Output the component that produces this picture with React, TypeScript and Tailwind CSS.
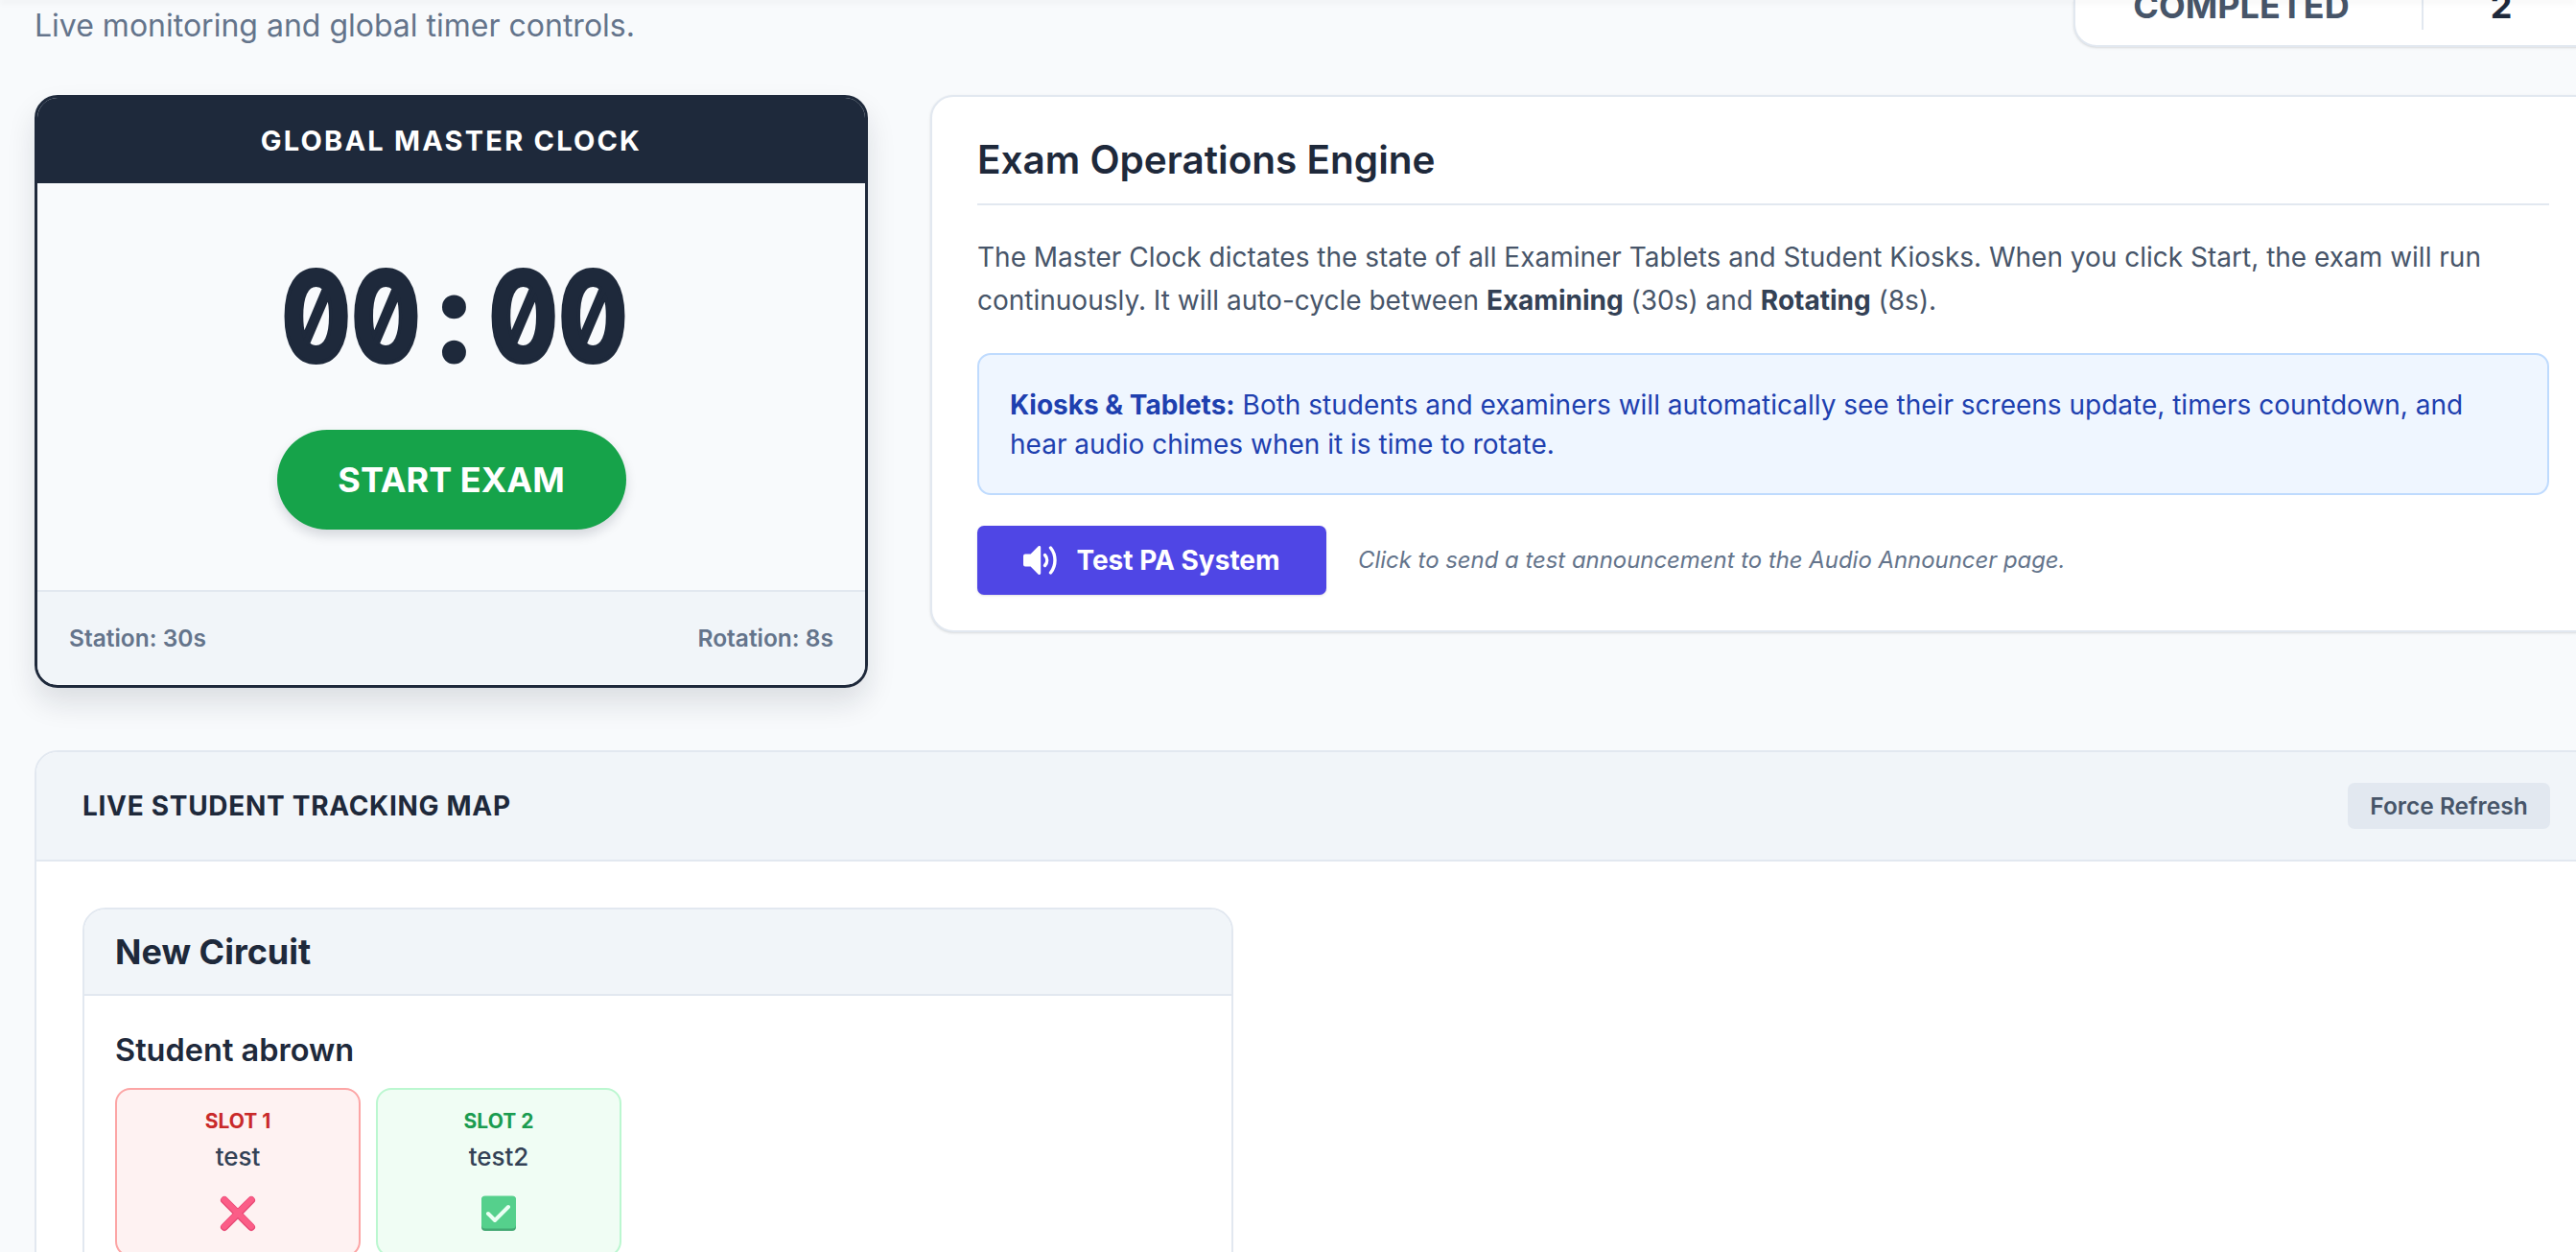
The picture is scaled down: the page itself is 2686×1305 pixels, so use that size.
const sans = "font-['Inter',sans-serif]";

function SpeakerIcon() {
    return (
        <svg width="36" height="30" viewBox="0 0 36 30" aria-hidden="true">
            <path d="M15.5 0.4L7.6 8.5H2a2 2 0 0 0-2 2v9a2 2 0 0 0 2 2h5.6l7.9 8.1a1.6 1.6 0 0 0 2.7-1.1V1.5a1.6 1.6 0 0 0-2.7-1.1z" fill="#fff" />
            <path d="M22.5 9.5c2.9 3.2 2.9 7.800 0 11" fill="none" stroke="#fff" strokeWidth="3.400" strokeLinecap="round" />
            <path d="M28.500 2c6 7.500 6 18.500 0 26" fill="none" stroke="#fff" strokeWidth="3.400" strokeLinecap="round" />
        </svg>
    );
}

function CrossMark() {
    return (
        <svg width="38" height="38" viewBox="0 0 38 38" aria-hidden="true">
            <path d="M5 5L33 33M33 5L5 33" stroke="#e84a76" strokeWidth="8" strokeLinecap="round" />
            <path d="M5 4.5L33 32.5M33 4.5L5 32.5" stroke="#fb5d87" strokeWidth="6" strokeLinecap="round" />
        </svg>
    );
}

function CheckMark() {
    return (
        <svg width="38" height="38" viewBox="0 0 38 38" aria-hidden="true">
            <rect x="1" y="1" width="36" height="36" rx="4" fill="#43a873" />
            <rect x="1" y="0.5" width="36" height="34" rx="4" fill="#55d08c" />
            <path d="M8 19L15 26L29 12" fill="none" stroke="#eafff3" strokeWidth="4" strokeLinecap="round" strokeLinejoin="round" />
        </svg>
    );
}

export default function App() {
    return (
        <div className={`relative h-[1305px] w-full overflow-hidden bg-[#f8fafc] ${sans}`}>
            <div className="absolute inset-x-0 -top-px h-px shadow-[0_2px_6px_rgba(15,23,42,0.18)]" />
            <main className="w-[2745px] px-9">
                <div className="flex h-[49px] items-start justify-between">
                    <p className="mt-[5px] text-[32px] leading-[44px] text-[#64748b]">Live monitoring and global timer controls.</p>
                    <div className="flex h-[49px] w-[547px] items-end rounded-b-[24px] border-2 border-t-0 border-[#e2e8f0] bg-white pb-4 shadow-sm">
                        <div className="flex h-[60px] w-[363px] items-end justify-center border-r-2 border-[#e2e8f0] pr-[15px] pb-[3px] text-[36px] leading-[44px] font-bold text-[#475569]">COMPLETED</div>
                        <div className="flex h-[60px] flex-1 items-end justify-center pr-[18px] pb-[3px] text-[36px] leading-[44px] font-bold text-[#1e293b]">2</div>
                    </div>
                </div>

                <div className="mt-[50px] grid grid-cols-[869px_1fr] items-start gap-[65px]">
                    <section className="h-[618px] overflow-hidden rounded-[24px] border-[3.5px] border-[#1e293b] shadow-[0_16px_30px_rgba(15,23,42,0.12)]">
                        <div className="flex h-[89px] items-center justify-center bg-[#1e293b] text-[29px] font-bold tracking-[2.2px] text-white">GLOBAL MASTER CLOCK</div>
                        <div className="flex h-[424px] flex-col items-center">
                            <div className="mt-[59px] ml-[6px] flex h-[160px] items-center text-[130px] leading-[160px] font-bold text-[#1e293b] slashed-zero">
                                <span className="flex w-[144px] scale-x-[0.83] justify-center [-webkit-text-stroke:4px_#1e293b]">00</span>
                                <span className="w-[72px] text-center [-webkit-text-stroke:3px_#1e293b]">:</span>
                                <span className="flex w-[144px] scale-x-[0.83] justify-center [-webkit-text-stroke:4px_#1e293b]">00</span>
                            </div>
                            <button className="mt-[38px] h-[104px] w-[364px] rounded-full bg-[#16a34a] text-[36px] font-bold text-white shadow-[0_6px_12px_rgba(15,23,42,0.15)]">START EXAM</button>
                        </div>
                        <div className="flex h-[98px] items-center justify-between border-t-2 border-[#e2e8f0] bg-[#f1f5f9] px-[33px] text-[24.5px] font-semibold text-[#64748b]">
                            <span>Station: 30s</span>
                            <span>Rotation: 8s</span>
                        </div>
                    </section>

                    <section className="h-[560px] rounded-[24px] border-2 border-[#e2e8f0] bg-white pt-[41px] pr-[49px] pl-[47px] shadow-sm">
                        <h2 className="border-b-2 border-[#e2e8f0] pb-[20px] text-[40.5px] leading-[50px] font-semibold text-[#1e293b]">Exam Operations Engine</h2>
                        <p className="mt-[32px] text-[28px] leading-[45px] text-[#475569]">
                            The Master Clock dictates the state of all Examiner Tablets and Student Kiosks. When you click Start, the exam will run continuously. It will auto-cycle between <strong className="font-bold text-[#334155]">Examining</strong> (30s) and <strong className="font-bold text-[#334155]">Rotating</strong> (8s).
                        </p>
                        <div className="mt-[32px] rounded-[14px] border-2 border-[#bfdbfe] bg-[#eff6ff] px-[32px] pt-[32px] pb-[30px] text-[28px] leading-[41px] text-[#1e40af]">
                            <strong className="font-bold">Kiosks &amp; Tablets:</strong> Both students and examiners will automatically see their screens update, timers countdown, and hear audio chimes when it is time to rotate.
                        </div>
                        <div className="mt-[32px] flex items-center gap-[33px]">
                            <button className="flex h-[72px] w-[364px] items-center justify-center gap-[19px] rounded-[7px] bg-[#4f46e5] text-[28px] font-bold text-white shadow-sm">
                                <SpeakerIcon />
                                Test PA System
                            </button>
                            <span className="text-[23.9px] text-[#64748b] italic">Click to send a test announcement to the Audio Announcer page.</span>
                        </div>
                    </section>
                </div>

                <section className="mt-[65px] rounded-t-[24px] border-2 border-[#e2e8f0] bg-white">
                    <div className="flex h-[114px] items-center justify-between rounded-t-[22px] border-b-2 border-[#e2e8f0] bg-[#f1f5f9] px-[48px]">
                        <h3 className="text-[28px] font-bold tracking-[0.7px] text-[#1e293b]">LIVE STUDENT TRACKING MAP</h3>
                        <button className="flex h-[48px] w-[211px] items-center justify-center rounded-[7px] bg-[#e2e8f0] text-[24.5px] font-semibold text-[#475569]">Force Refresh</button>
                    </div>
                    <div className="p-[48px]">
                        <div className="w-[1200px] rounded-t-[24px] border-2 border-[#e2e8f0]">
                            <div className="flex h-[90px] items-center rounded-t-[22px] border-b-2 border-[#e2e8f0] bg-[#f1f5f9] px-[32px] text-[36px] font-bold text-[#1e293b]">New Circuit</div>
                            <div className="px-[32px] pt-[39px]">
                                <h4 className="text-[32.5px] leading-[36px] font-semibold text-[#1e293b]">Student abrown</h4>
                                <div className="mt-[21px] flex gap-4">
                                    <div className="flex h-[176px] w-[256px] flex-col items-center rounded-[16px] border-2 border-[#fca5a5] bg-[#fef2f2] pt-[19px]">
                                        <span className="text-[21px] leading-[28px] font-bold text-[#c92a2a]">SLOT 1</span>
                                        <span className="mt-[5px] text-[26px] leading-[36px] font-medium text-[#334155]">test</span>
                                        <span className="mt-[22px]"><CrossMark /></span>
                                    </div>
                                    <div className="flex h-[176px] w-[256px] flex-col items-center rounded-[16px] border-2 border-[#bbf7d0] bg-[#f0fdf4] pt-[19px]">
                                        <span className="text-[21px] leading-[28px] font-bold text-[#1b9c50]">SLOT 2</span>
                                        <span className="mt-[5px] text-[26px] leading-[36px] font-medium text-[#334155]">test2</span>
                                        <span className="mt-[22px]"><CheckMark /></span>
                                    </div>
                                </div>
                            </div>
                        </div>
                    </div>
                </section>
            </main>
        </div>
    );
}
